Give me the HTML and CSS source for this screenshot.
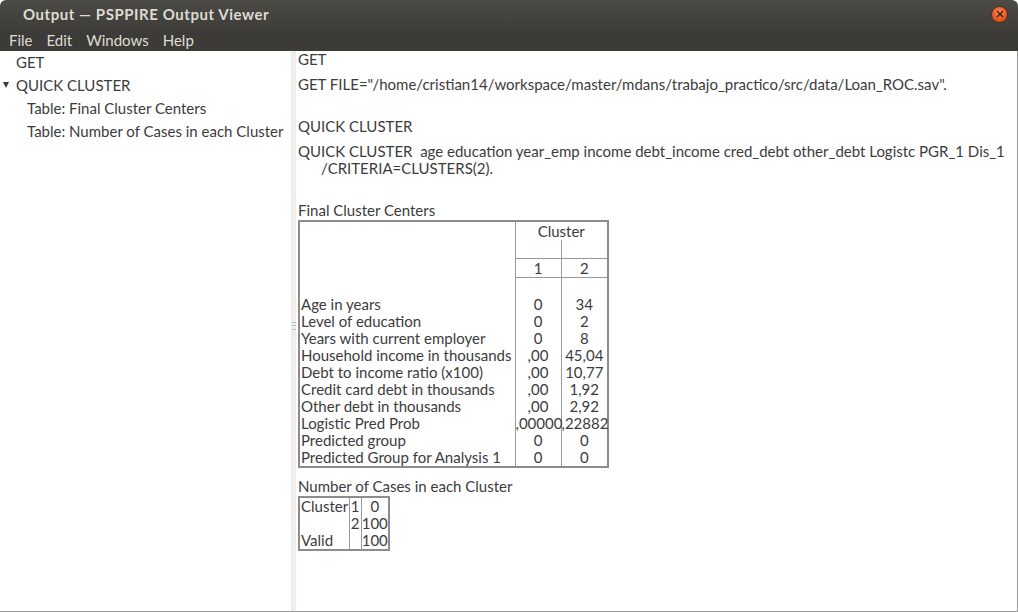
FILE: index.html
```html
<!DOCTYPE html>
<html>
<head>
<meta charset="utf-8">
<title>Output — PSPPIRE Output Viewer</title>
<link rel="stylesheet" href="styles.css">
</head>
<body>
<div class="window">
  <div class="titlebar">
    <span class="title">Output — PSPPIRE Output Viewer</span>
    <span class="close"><svg width="8" height="8" viewBox="0 0 8 8"><path d="M1 1 L7 7 M7 1 L1 7" stroke="#3a1a0c" stroke-width="1.3" fill="none"/></svg></span>
  </div>
  <div class="menubar">
    <span class="menu">File</span>
    <span class="menu">Edit</span>
    <span class="menu">Windows</span>
    <span class="menu">Help</span>
  </div>
  <div class="main">
    <div class="tree">
      <div class="node lvl1">GET</div>
      <div class="node lvl1"><span class="expander"></span>QUICK CLUSTER</div>
      <div class="node lvl2">Table: Final Cluster Centers</div>
      <div class="node lvl2">Table: Number of Cases in each Cluster</div>
    </div>
    <div class="handle"><span class="grip"></span></div>
    <div class="output">
      <div class="heading">GET</div>
      <div class="syntax">GET FILE="/home/cristian14/workspace/master/mdans/trabajo_practico/src/data/Loan_ROC.sav".</div>
      <div class="heading">QUICK CLUSTER</div>
      <div class="syntax">QUICK CLUSTER&nbsp; age education year_emp income debt_income cred_debt other_debt Logistc PGR_1 Dis_1<br><span class="indent">/CRITERIA=CLUSTERS(2).</span></div>
      <div class="caption">Final Cluster Centers</div>
      <div class="pivot">
        <table class="t1">
          <colgroup><col class="c-label"><col class="c-v"><col class="c-v"></colgroup>
          <tr class="h"><td class="lab bl" rowspan="4"></td><td colspan="2" class="ctr">Cluster</td></tr>
          <tr class="h"><td class="bb br"></td><td class="bb"></td></tr>
          <tr class="h"><td class="ctr bb br">1</td><td class="ctr bb">2</td></tr>
          <tr class="h"><td class="br"></td><td></td></tr>
          <tr><td class="lab bl">Age in years</td><td class="ctr br">0</td><td class="ctr">34</td></tr>
          <tr><td class="lab bl">Level of education</td><td class="ctr br">0</td><td class="ctr">2</td></tr>
          <tr><td class="lab bl">Years with current employer</td><td class="ctr br">0</td><td class="ctr">8</td></tr>
          <tr><td class="lab bl">Household income in thousands</td><td class="ctr br">,00</td><td class="ctr">45,04</td></tr>
          <tr><td class="lab bl">Debt to income ratio (x100)</td><td class="ctr br">,00</td><td class="ctr">10,77</td></tr>
          <tr><td class="lab bl">Credit card debt in thousands</td><td class="ctr br">,00</td><td class="ctr">1,92</td></tr>
          <tr><td class="lab bl">Other debt in thousands</td><td class="ctr br">,00</td><td class="ctr">2,92</td></tr>
          <tr><td class="lab bl">Logistic Pred Prob</td><td class="ctr br">,00000</td><td class="ctr">,22882</td></tr>
          <tr><td class="lab bl">Predicted group</td><td class="ctr br">0</td><td class="ctr">0</td></tr>
          <tr><td class="lab bl">Predicted Group for Analysis 1</td><td class="ctr br">0</td><td class="ctr">0</td></tr>
        </table>
      </div>
      <div class="caption cap2">Number of Cases in each Cluster</div>
      <div class="pivot">
        <table class="t2">
          <colgroup><col class="c-a"><col class="c-b"><col class="c-c"></colgroup>
          <tr><td class="lab br">Cluster</td><td class="ctr br">1</td><td class="ctr">0</td></tr>
          <tr><td class="lab br"></td><td class="ctr br">2</td><td class="ctr">100</td></tr>
          <tr><td class="lab br">Valid</td><td class="ctr br"></td><td class="ctr">100</td></tr>
        </table>
      </div>
    </div>
  </div>
</div>
</body>
</html>
```

FILE: styles.css
```css
html, body {
  margin: 0;
  padding: 0;
  background: #ffffff;
}
body {
  font-family: Lato, "Liberation Sans", sans-serif;
  font-size: 15px;
  color: #3c3c3c;
}
.window {
  width: 1018px;
  height: 612px;
  display: flex;
  flex-direction: column;
  overflow: hidden;
}
.titlebar {
  height: 30px;
  flex: none;
  display: flex;
  align-items: center;
  justify-content: space-between;
  padding: 0 10px 0 23px;
  background: linear-gradient(#4b4a45, #3e3d39);
  border-radius: 6px 6px 0 0;
}
.title {
  color: #dfdbd2;
  font-weight: bold;
  font-size: 15px;
  letter-spacing: 0.55px;
  margin-top: -2px;
}
.close {
  width: 17px;
  height: 17px;
  border-radius: 50%;
  background: radial-gradient(circle at 50% 35%, #f58a5a, #e0511b 70%, #c9461a);
  border: 1px solid #5a2a14;
  display: flex;
  align-items: center;
  justify-content: center;
  margin-top: -2px;
  box-sizing: border-box;
}
.menubar {
  height: 21px;
  flex: none;
  background: #3c3b37;
  display: flex;
  align-items: center;
  gap: 14px;
  padding-left: 9px;
  padding-bottom: 2px;
  box-sizing: border-box;
}
.menu {
  color: #dfdbd2;
  font-size: 15px;
}
.main {
  flex: 1;
  display: flex;
  border-right: 1px solid #9a9a9a;
  border-bottom: 1px solid #9a9a9a;
  min-height: 0;
}
.tree {
  width: 291px;
  flex: none;
  background: #ffffff;
}
.node {
  height: 23px;
  line-height: 22px;
  white-space: nowrap;
  position: relative;
}
.lvl1 { padding-left: 16px; }
.lvl2 { padding-left: 27px; }
.expander {
  position: absolute;
  left: 3px;
  top: 8px;
  width: 0;
  height: 0;
  border-left: 3.5px solid transparent;
  border-right: 3.5px solid transparent;
  border-top: 6px solid #3c3c3c;
}
.handle {
  width: 5px;
  flex: none;
  background: #efeeec;
  display: flex;
  align-items: center;
  justify-content: center;
}
.grip {
  width: 4px;
  height: 6px;
  border-top: 1px solid #bdbcb8;
  border-bottom: 1px solid #bdbcb8;
  position: relative;
  margin-top: -10px;
}
.grip::after {
  content: "";
  position: absolute;
  left: 0;
  right: 0;
  top: 2px;
  border-top: 1px solid #bdbcb8;
}
.output {
  flex: 1;
  padding-left: 2px;
  background: #ffffff;
  line-height: 17px;
  white-space: nowrap;
}
.heading {
  margin-bottom: 8px;
}
.syntax {
  margin-bottom: 25px;
}
.indent {
  padding-left: 23px;
}
.caption {
  margin-bottom: 1px;
}
.cap2 {
  margin-top: 7px;
}
.pivot {
  display: inline-block;
  border: 2px solid #8c8c8c;
}
table {
  border-collapse: collapse;
  table-layout: fixed;
}
td {
  padding: 0;
  height: 17px;
  line-height: 17px;
  white-space: nowrap;
  overflow: visible;
}
.t1 { width: 307px; }
.t1 .h td { height: 18px; }
.c-label { width: 215px; }
.c-v { width: 46px; }
.lab { text-align: left; padding-left: 1px; }
.ctr { text-align: center; }
.br { border-right: 1px solid #9a9a9a; }
.bb { border-bottom: 1px solid #9a9a9a; }
td.bl { border-right: 1px solid #9a9a9a; }
.t2 { width: 88px; }
.c-a { width: 49px; }
.c-b { width: 12px; }
.c-c { width: 27px; }
```
